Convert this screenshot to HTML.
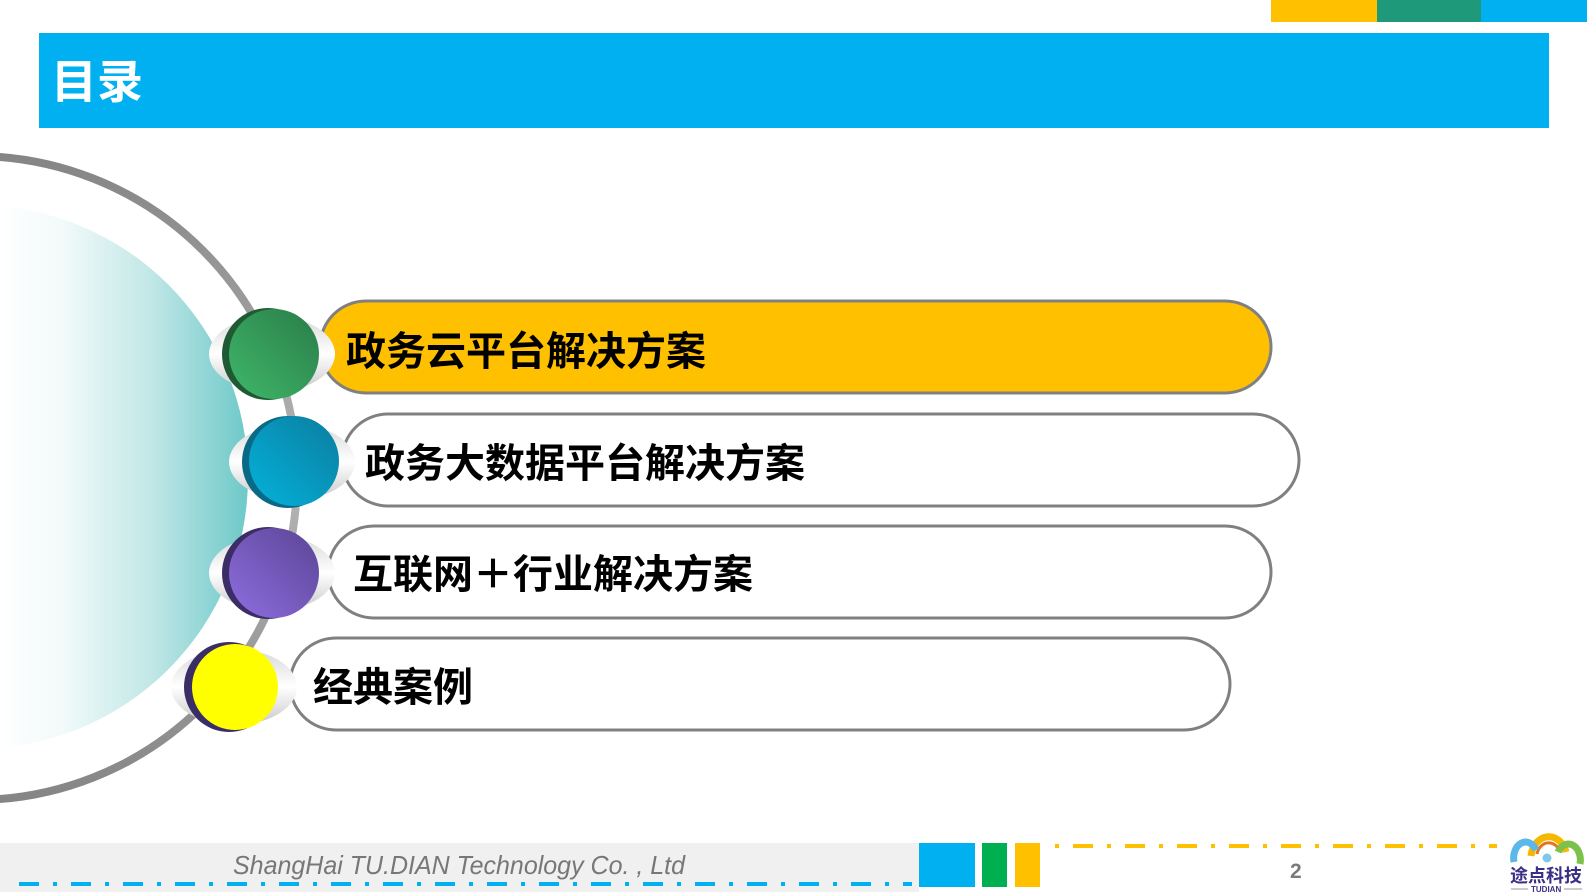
<!DOCTYPE html>
<html><head><meta charset="utf-8">
<style>
html,body{margin:0;padding:0;width:1587px;height:892px;overflow:hidden;background:#fff;}
svg{display:block}
</style></head>
<body>
<svg width="1587" height="892" viewBox="0 0 1587 892" xmlns="http://www.w3.org/2000/svg">
<defs>
  <linearGradient id="teal" gradientUnits="userSpaceOnUse" x1="0" y1="0" x2="250" y2="0">
    <stop offset="0" stop-color="#ffffff"/>
    <stop offset="0.25" stop-color="#f2fafa"/>
    <stop offset="0.6" stop-color="#c2e7e7"/>
    <stop offset="1" stop-color="#6cc8c8"/>
  </linearGradient>
  <linearGradient id="ring" x1="0" y1="0" x2="0" y2="1">
    <stop offset="0" stop-color="#858585"/>
    <stop offset="0.5" stop-color="#b5b5b5"/>
    <stop offset="1" stop-color="#858585"/>
  </linearGradient>
  <linearGradient id="lens" x1="0" y1="0" x2="0" y2="1">
    <stop offset="0" stop-color="#d8d8d8"/>
    <stop offset="0.5" stop-color="#ffffff"/>
    <stop offset="1" stop-color="#c8c8c8"/>
  </linearGradient>
  <linearGradient id="g1" x1="0" y1="1" x2="1" y2="0">
    <stop offset="0" stop-color="#3fb86a"/><stop offset="1" stop-color="#2a7c48"/>
  </linearGradient>
  <linearGradient id="g2" x1="0" y1="1" x2="1" y2="0">
    <stop offset="0" stop-color="#05b2dc"/><stop offset="1" stop-color="#0a7d9e"/>
  </linearGradient>
  <linearGradient id="g3" x1="0" y1="1" x2="1" y2="0">
    <stop offset="0" stop-color="#8f6ee0"/><stop offset="1" stop-color="#5a4494"/>
  </linearGradient>
</defs>

<rect x="1271" y="0" width="106" height="22" fill="#FFC000"/>
<rect x="1377" y="0" width="104" height="22" fill="#1E9A7A"/>
<rect x="1481" y="0" width="106" height="22" fill="#00B0F0"/>

<rect x="39" y="33" width="1510" height="95" fill="#00B0F0"/>
<text x="51" y="98" font-family="'Liberation Sans','Noto Sans CJK SC',sans-serif" font-weight="bold" font-size="46" fill="#fff">目录</text>

<circle cx="-24" cy="477" r="272" fill="url(#teal)"/>
<circle cx="-25" cy="478" r="322" fill="none" stroke="url(#ring)" stroke-width="8"/>

<rect x="320" y="301" width="951" height="92" rx="46" fill="#FFC000" stroke="#808080" stroke-width="3"/>
<rect x="342" y="414" width="957" height="92" rx="46" fill="#fff" stroke="#808080" stroke-width="3"/>
<rect x="328" y="526" width="943" height="92" rx="46" fill="#fff" stroke="#808080" stroke-width="3"/>
<rect x="290" y="638" width="940" height="92" rx="46" fill="#fff" stroke="#808080" stroke-width="3"/>

<g>
  <ellipse cx="272" cy="354" rx="63" ry="38" fill="url(#lens)"/>
  <circle cx="268" cy="354" r="46" fill="#1f5a34"/>
  <circle cx="274" cy="354" r="45" fill="url(#g1)"/>

  <ellipse cx="292" cy="462" rx="63" ry="38" fill="url(#lens)"/>
  <circle cx="288" cy="462" r="46" fill="#0a6a86"/>
  <circle cx="294" cy="461" r="45" fill="url(#g2)"/>

  <ellipse cx="272" cy="573" rx="63" ry="38" fill="url(#lens)"/>
  <circle cx="268" cy="573" r="46" fill="#3b2d66"/>
  <circle cx="274" cy="573" r="45" fill="url(#g3)"/>

  <ellipse cx="234" cy="687" rx="63" ry="38" fill="url(#lens)"/>
  <circle cx="229" cy="687" r="45" fill="#3b2d66"/>
  <circle cx="235" cy="687" r="43" fill="#FFFF00"/>
</g>

<g font-family="'Liberation Sans','Noto Sans CJK SC',sans-serif" font-weight="bold" font-size="40" fill="#000">
  <text x="346" y="365">政务云平台解决方案</text>
  <text x="365" y="477">政务大数据平台解决方案</text>
  <text x="353" y="588">互联网＋行业解决方案</text>
  <text x="313" y="701">经典案例</text>
</g>

<rect x="0" y="843" width="919" height="49" fill="#F0F0F0"/>
<text x="233" y="874" font-family="'Liberation Sans',sans-serif" font-style="italic" font-size="26" fill="#777" textLength="452" lengthAdjust="spacingAndGlyphs">ShangHai TU.DIAN  Technology  Co. , Ltd</text>
<line x1="19" y1="884" x2="912" y2="884" stroke="#00B0F0" stroke-width="4" stroke-dasharray="20 14 4 14"/>
<rect x="919" y="843" width="56" height="44" fill="#00B0F0"/>
<rect x="982" y="843" width="25" height="44" fill="#00B050"/>
<rect x="1015" y="843" width="25" height="44" fill="#FFC000"/>
<line x1="1055" y1="846" x2="1497" y2="846" stroke="#FFC000" stroke-width="4" stroke-dasharray="4 14 20 14"/>
<text x="1290" y="878" font-family="'Liberation Sans',sans-serif" font-weight="bold" font-size="21" fill="#7a7a7a">2</text>

<g>
  <path d="M1531 856 A18 22 0 0 1 1566 852" fill="none" stroke="#F5B800" stroke-width="7"/>
  <path d="M1537 854 A12 14 0 0 1 1560 852" fill="none" stroke="#E8731E" stroke-width="3"/>
  <path d="M1514 862 A12 16 0 0 1 1536 850" fill="none" stroke="#5BB8E8" stroke-width="7"/>
  <path d="M1558 852 A12 16 0 0 1 1580 864" fill="none" stroke="#7CC24A" stroke-width="7"/>
  <circle cx="1547" cy="858" r="4.5" fill="#7EC8EC"/>
  <text x="1510" y="882" font-family="'Liberation Sans','Noto Sans CJK SC',sans-serif" font-weight="bold" font-size="18" fill="#3a2f86">途点科技</text>
  <line x1="1511" y1="889" x2="1528" y2="889" stroke="#999" stroke-width="1"/>
  <text x="1531" y="892" font-family="'Liberation Sans',sans-serif" font-weight="bold" font-size="8" fill="#3a2f86">TUDIAN</text>
  <line x1="1564" y1="889" x2="1582" y2="889" stroke="#999" stroke-width="1"/>
</g>
</svg>
</body></html>
